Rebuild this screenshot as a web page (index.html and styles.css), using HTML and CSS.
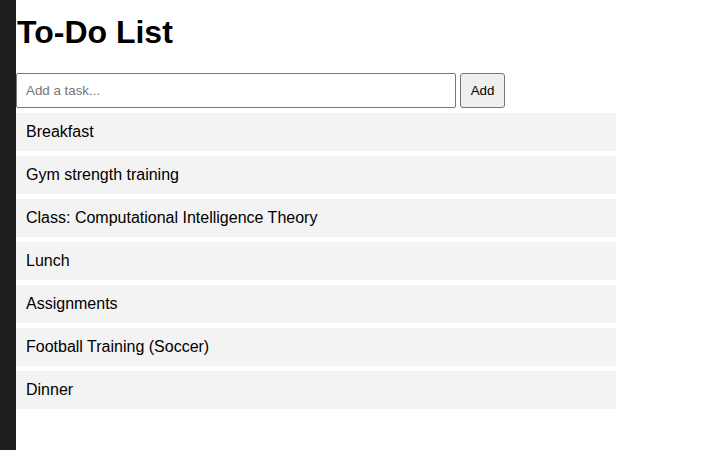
FILE: index.html
```html
<!DOCTYPE html>
<html lang="en">
<head>
<meta charset="UTF-8">
<title>To-Do List</title>
<link rel="stylesheet" href="styles.css">
</head>
<body>
<div class="sidebar"></div>
<main class="app">
  <h1 class="title">To-Do List</h1>
  <form class="add-form">
    <input class="task-input" type="text" placeholder="Add a task...">
    <button class="add-btn" type="button">Add</button>
  </form>
  <ul class="task-list">
    <li class="task">Breakfast</li>
    <li class="task">Gym strength training</li>
    <li class="task">Class: Computational Intelligence Theory</li>
    <li class="task">Lunch</li>
    <li class="task">Assignments</li>
    <li class="task">Football Training (Soccer)</li>
    <li class="task">Dinner</li>
  </ul>
</main>
</body>
</html>
```
FILE: styles.css
```css
html, body {
  margin: 0;
  padding: 0;
  height: 100%;
  background: #ffffff;
}
body {
  display: flex;
  font-family: "Liberation Sans", Arial, sans-serif;
  color: #000;
}
.sidebar {
  width: 16px;
  flex: 0 0 16px;
  background: #1e1f20;
}
.app {
  flex: 1;
  padding: 0;
}
.title {
  font-size: 32px;
  font-weight: bold;
  line-height: 37px;
  margin: 14px 0 22px 1px;
}
.add-form {
  display: flex;
  align-items: flex-start;
  gap: 4px;
  margin: 0 0 5px 0;
}
.task-input {
  box-sizing: border-box;
  width: 440px;
  height: 35px;
  padding: 0 9px;
  font-family: "Liberation Sans", Arial, sans-serif;
  font-size: 13.33px;
  border: 1px solid #767676;
  border-radius: 2px;
  margin: 0;
}
.task-input::placeholder {
  color: #757575;
}
.add-btn {
  box-sizing: border-box;
  width: 45px;
  height: 35px;
  padding: 0;
  text-align: center;
  font-family: "Liberation Sans", Arial, sans-serif;
  font-size: 13.33px;
  color: #000;
  background: #efefef;
  border: 1px solid #767676;
  border-radius: 3px;
  margin: 0;
}
.task-list {
  list-style: none;
  margin: 0;
  padding: 0;
  width: 600px;
}
.task {
  background: #f3f3f3;
  padding: 10px;
  font-size: 16px;
  line-height: 18px;
  margin-bottom: 5px;
}
```
